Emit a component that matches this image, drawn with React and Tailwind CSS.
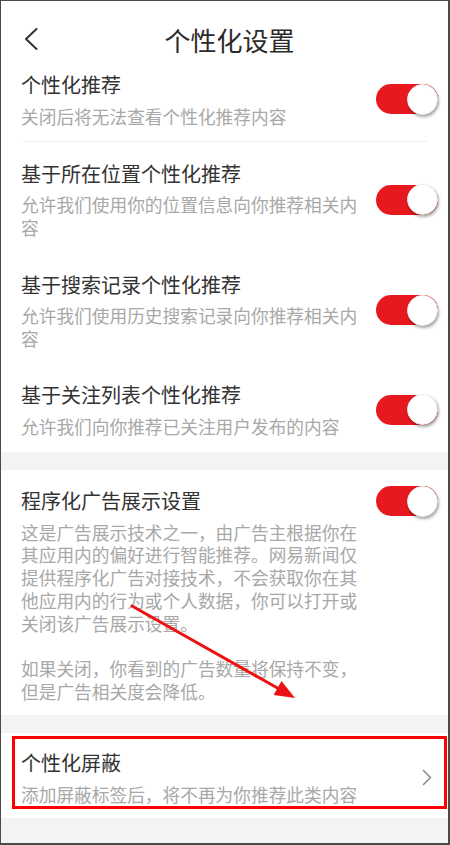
import React from 'react';

const Toggle = () => (
    <div className="w-[62px] h-[30px] rounded-full bg-[#e8191e] flex items-center justify-end shrink-0">
        <div className="w-[31px] h-[31px] rounded-full bg-white border border-[#eeeeee] shadow-[1px_2px_3px_rgba(0,0,0,0.35)]"></div>
    </div>
);

const Row = ({ title, sub }) => (
    <div className="flex items-center bg-white pl-[20px] pr-[10px] pt-[17.5px] pb-[13.75px]">
        <div className="flex-1 min-w-0 pr-[10px]">
            <div className="text-[20px] leading-[28px] text-[#333333]">{title}</div>
            <div className="mt-[5.5px] text-[17.7px] leading-[23px] text-[#a8a8a8]">{sub}</div>
        </div>
        <Toggle />
    </div>
);

const App = () => {
    return (
        <div className="relative w-[450px] h-[845px] flex flex-col overflow-hidden bg-[#f3f3f3] border-l border-t border-r-2 border-b-2 border-[#4a4a4a] font-['Noto_Sans_CJK_SC',sans-serif]">
            {/* Header */}
            <div className="relative h-[55px] pt-[23px] flex items-center justify-center bg-white">
                <svg className="absolute left-[23px] top-[27px]" width="14" height="22" viewBox="0 0 14 22" fill="none">
                    <polyline points="12.5,1 2,11 12.5,21" stroke="#333333" strokeWidth="2" strokeLinecap="round" strokeLinejoin="round" />
                </svg>
                <div className="pl-[10px] text-[26px] leading-[32px] text-[#2b2b2b]">个性化设置</div>
            </div>

            {/* Recommendation group */}
            <div className="bg-white">
                <div className="flex items-center pl-[20px] pr-[10px] pt-[15px] pb-[13.75px]">
                    <div className="flex-1 min-w-0 pr-[10px]">
                        <div className="text-[20px] leading-[28px] text-[#333333]">个性化推荐</div>
                        <div className="mt-[5.5px] text-[17.7px] leading-[23px] text-[#a8a8a8]">关闭后将无法查看个性化推荐内容</div>
                    </div>
                    <Toggle />
                </div>
                <div className="mx-[21px] h-px bg-[#efefef]"></div>
                <Row title="基于所在位置个性化推荐" sub="允许我们使用你的位置信息向你推荐相关内容" />
                <Row title="基于搜索记录个性化推荐" sub="允许我们使用历史搜索记录向你推荐相关内容" />
                <Row title="基于关注列表个性化推荐" sub="允许我们向你推荐已关注用户发布的内容" />
            </div>

            <div className="h-[18px] shrink-0"></div>

            {/* Programmatic ads */}
            <div className="flex items-start bg-white pl-[20px] pr-[10px] pt-[17.5px] pb-[12px]">
                <div className="flex-1 min-w-0 pr-[10px]">
                    <div className="text-[20px] leading-[28px] text-[#333333]">程序化广告展示设置</div>
                    <div className="mt-[5.5px] text-[17.7px] leading-[22.8px] text-[#a8a8a8]">
                        <p>这是广告展示技术之一，由广告主根据你在其应用内的偏好进行智能推荐。网易新闻仅提供程序化广告对接技术，不会获取你在其他应用内的行为或个人数据，你可以打开或关闭该广告展示设置。</p>
                        <p className="mt-[22.8px]">如果关闭，你看到的广告数量将保持不变，但是广告相关度会降低。</p>
                    </div>
                </div>
                <div className="mt-[-1px]">
                    <Toggle />
                </div>
            </div>

            <div className="h-[18px] shrink-0"></div>

            {/* Blocking */}
            <div className="flex items-center bg-white pl-[20px] pr-[16px] pt-[16px] pb-[11.5px]">
                <div className="flex-1 min-w-0">
                    <div className="text-[20px] leading-[28px] text-[#333333]">个性化屏蔽</div>
                    <div className="mt-[6.5px] text-[17.7px] leading-[23px] text-[#a8a8a8]">添加屏蔽标签后，将不再为你推荐此类内容</div>
                </div>
                <svg width="10" height="17" viewBox="0 0 10 17" fill="none">
                    <polyline points="1.5,1.5 8.5,8.5 1.5,15.5" stroke="#8c8c8c" strokeWidth="1.6" strokeLinecap="round" strokeLinejoin="round" />
                </svg>
            </div>

            <div className="flex-1"></div>

            {/* Annotation overlay */}
            <div className="absolute left-[11px] top-[735px] w-[435px] h-[73px] border-[3px] border-[#ff0000] pointer-events-none"></div>
            <svg className="absolute left-0 top-0 pointer-events-none" width="448" height="843" viewBox="0 0 448 843">
                <line x1="131" y1="605" x2="280" y2="689" stroke="#ee1111" strokeWidth="3" strokeLinecap="round" />
                <polygon points="294,697 272.6,694.1 280.5,680.1" fill="#ee1111" />
            </svg>
        </div>
    );
};

export default App;
